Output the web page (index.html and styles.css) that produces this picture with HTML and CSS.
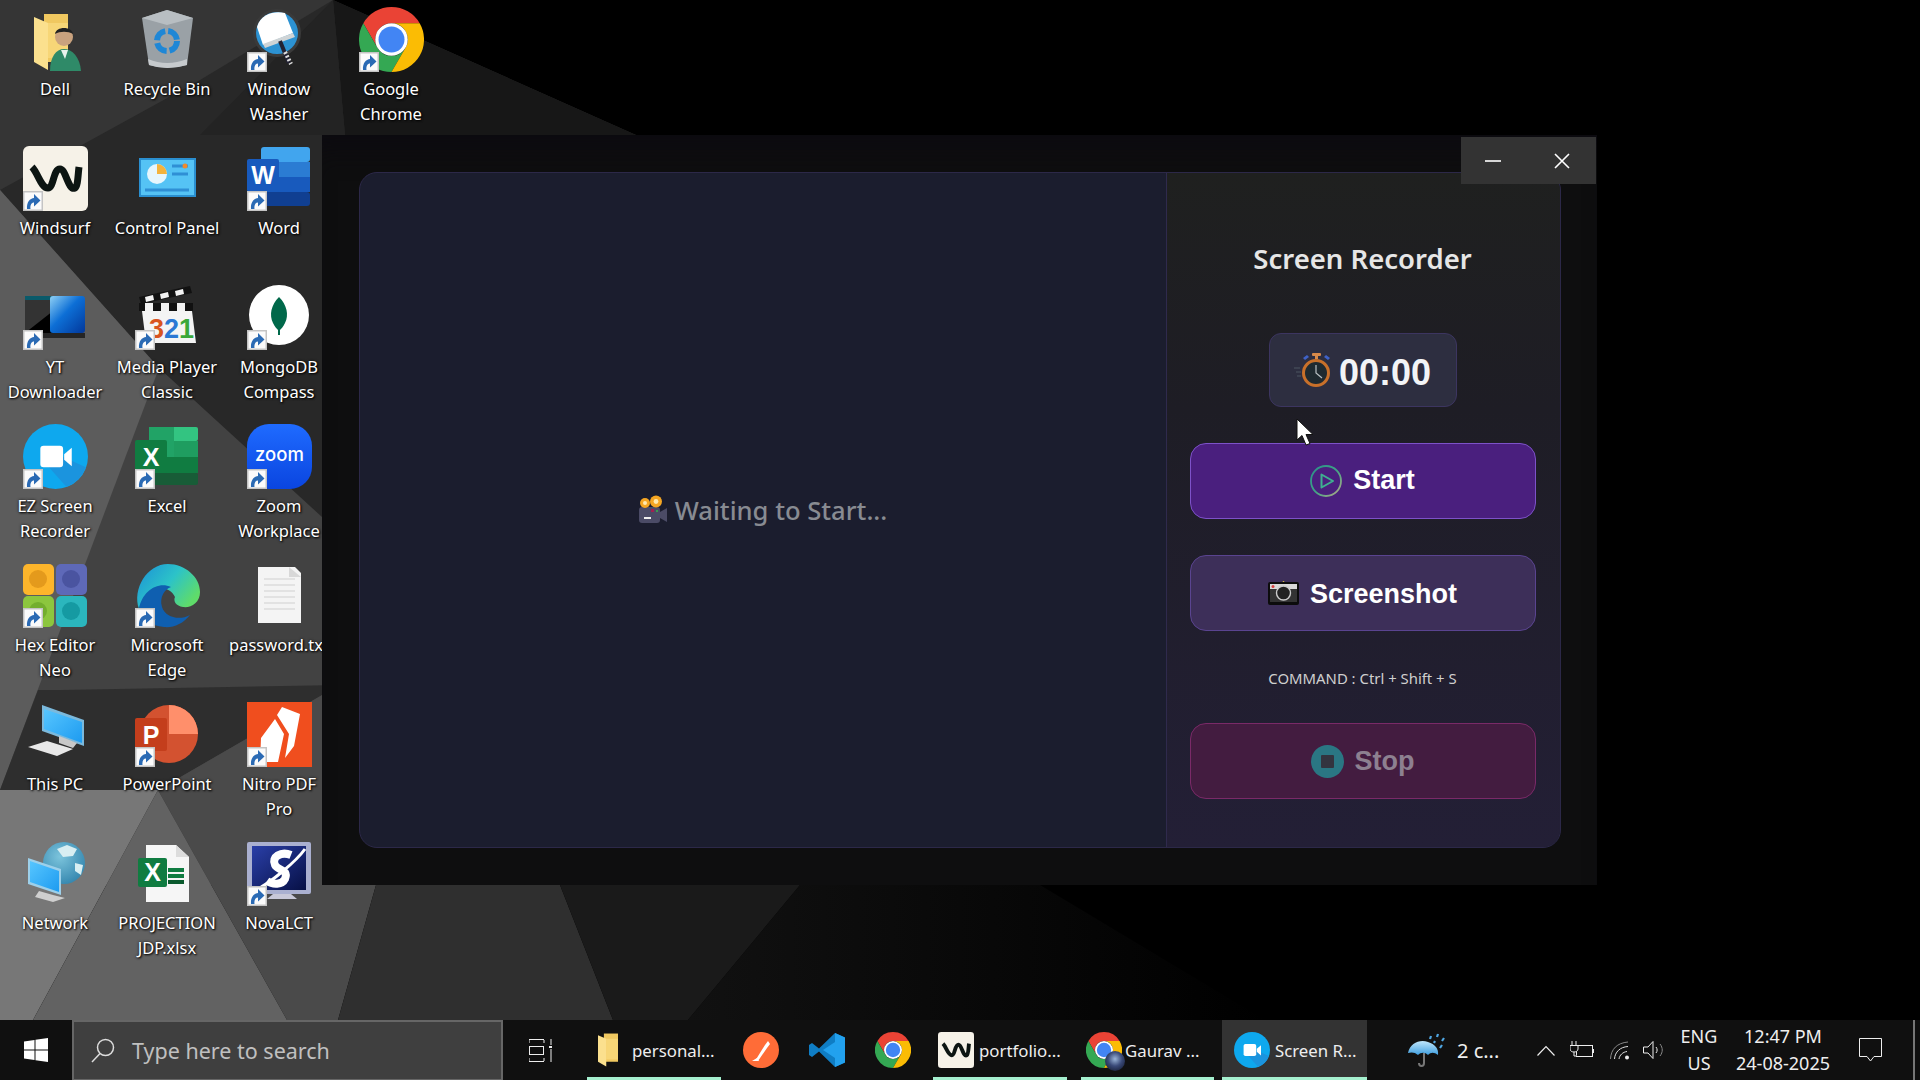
FILE: index.html
```html
<!DOCTYPE html>
<html lang="en">
<head>
<meta charset="utf-8">
<title>Screen Recorder</title>
<link rel="stylesheet" href="styles.css">
</head>
<body>
<svg class="defs" width="0" height="0" aria-hidden="true">
  <defs>
    <linearGradient id="gPlay" x1="0" y1="0" x2="1" y2="1"><stop offset="0" stop-color="#2a8f8a"/><stop offset="0.5" stop-color="#3fa585"/><stop offset="1" stop-color="#b8a888"/></linearGradient>
    <linearGradient id="gEdge" x1="0" y1="0" x2="1" y2="0.6"><stop offset="0" stop-color="#1b8fd8"/><stop offset="0.55" stop-color="#2cc3c8"/><stop offset="1" stop-color="#5fdc6a"/></linearGradient>
    <linearGradient id="gZoom" x1="0" y1="0" x2="0" y2="1"><stop offset="0" stop-color="#1f6bff"/><stop offset="1" stop-color="#0a45e0"/></linearGradient>
    <linearGradient id="gYt" x1="0" y1="0" x2="1" y2="1"><stop offset="0" stop-color="#8fd0f5"/><stop offset="0.45" stop-color="#0d6fd6"/><stop offset="1" stop-color="#02379a"/></linearGradient>
    <linearGradient id="gScreen" x1="0" y1="0" x2="1" y2="1"><stop offset="0" stop-color="#57c6ff"/><stop offset="1" stop-color="#1d9bf0"/></linearGradient>
    <linearGradient id="gNova" x1="0" y1="0" x2="1" y2="1"><stop offset="0" stop-color="#2a3fa8"/><stop offset="1" stop-color="#071045"/></linearGradient>
    <linearGradient id="gUmb" x1="0" y1="0" x2="0" y2="1"><stop offset="0" stop-color="#bfe6fb"/><stop offset="1" stop-color="#3f9fe0"/></linearGradient>
    <radialGradient id="gGlobe" cx="0.4" cy="0.35" r="0.8"><stop offset="0" stop-color="#7cc4dc"/><stop offset="1" stop-color="#2a7da8"/></radialGradient>
    <linearGradient id="gWall" x1="0" y1="0" x2="1" y2="0"><stop offset="0" stop-color="#111"/><stop offset="1" stop-color="#000"/></linearGradient>

    <symbol id="sc" viewBox="0 0 20 20"><rect width="20" height="20" fill="#c4c4c4"/><rect x="1.500" y="1.500" width="17" height="17" fill="#fbfbfb"/><path d="M4 18C3.500 11 7 7.500 11 7V3L17.500 9.500L11 15.500V11.500C8.500 11.500 7 14 7.500 18Z" fill="#2a6ab4"/></symbol>

    <symbol id="chrome" viewBox="0 0 48 48"><path d="M24 0A24 24 0 0 0 3.2 12L13.6 30A12 12 0 0 1 24 12H44.8A24 24 0 0 0 24 0Z" fill="#ea4335"/><path d="M3.2 12A24 24 0 0 0 24 48L34.4 30A12 12 0 0 1 13.6 30Z" fill="#34a853"/><path d="M44.8 12H24A12 12 0 0 1 34.4 30L24 48A24 24 0 0 0 44.8 12Z" fill="#fbbc04"/><circle cx="24" cy="24" r="12" fill="#fff"/><circle cx="24" cy="24" r="9.6" fill="#4285f4"/></symbol>

    <symbol id="windsurf" viewBox="0 0 65 65"><rect width="65" height="65" rx="6" fill="#f6f2e8"/><path d="M9 21C15 27 18 42 25 42C31 42 30 23 37 23C43 23 45 45 52 42C55 40 55 28 56 21" fill="none" stroke="#0c1512" stroke-width="7"/></symbol>

    <symbol id="ez" viewBox="0 0 60 60"><circle cx="30" cy="30" r="30" fill="#0ea8ee"/><path d="M36 30L58 40A30 30 0 0 1 40 58L24 40Z" fill="#1b94de"/><rect x="16" y="20" width="21" height="20" rx="3" fill="#fff"/><path d="M38 28l7-6v17l-7-6z" fill="#fff"/></symbol>

    <symbol id="folder" viewBox="0 0 34 56"><path d="M10 0H34V48H10Z" fill="#f0c860"/><path d="M14 9H34V44H14Z" fill="#f7d677"/><path d="M0 3L14 9V56L0 48Z" fill="#fbe08e"/></symbol>
  </defs>
</svg>

<div class="screen">
  <main class="desktop">
    <svg class="wallpaper" viewBox="0 0 1920 1020" preserveAspectRatio="none" aria-hidden="true">
      <rect width="1920" height="1020" fill="#000"/>
      <path d="M333 0L636 135V885H0V0Z" fill="#282828"/>
      <path d="M0 0H333L200 80L0 190Z" fill="#353535"/>
      <path d="M333 0L636 135H345Z" fill="#171717"/>
      <path d="M333 0L345 135H200Z" fill="#232323"/>
      <path d="M0 190L159 368L322 517V700L158 790H0Z" fill="#424242"/>
      <path d="M0 190L159 368L0 790Z" fill="#5c5c5c"/>
      <path d="M38 690L0 790H158L340 685L60 690Z" fill="#2e2e2e"/>
      <path d="M322 695L158 790L287 1020H338L376 885L376 685Z" fill="#4a4a4a"/>
      <path d="M0 790H158L33 1020H0Z" fill="#777"/>
      <path d="M158 790L287 1020H33Z" fill="#626262"/>
      <path d="M376 885H560L613 1020H338Z" fill="#2f2f2f"/>
      <path d="M560 885H800L688 1020H613Z" fill="#1a1a1a"/>
      <path d="M800 885H1040L1265 1020H688Z" fill="url(#gWall)"/>
    </svg>

    <div class="icons">
      <a class="tile"><span class="ico-wrap"><svg class="ico" viewBox="0 0 65 65"><use href="#folder" x="11" y="7" width="34" height="56"/><circle cx="41" cy="30" r="9" fill="#c9a27e"/><path d="M32 27c1-8 17-8 18 0-5-3-13-3-18 0z" fill="#222"/><path d="M27 64c0-14 6-22 14-22s16 8 17 22z" fill="#2f8a68"/><path d="M38 43l4 9 3-9z" fill="#e8f2ec"/></svg></span><span class="lbl">Dell</span></a>

      <a class="tile"><span class="ico-wrap"><svg class="ico"><use href="#windsurf"/></svg><svg class="sc"><use href="#sc"/></svg></span><span class="lbl">Windsurf</span></a>

      <a class="tile"><span class="ico-wrap"><svg class="ico" viewBox="0 0 65 65"><path d="M2 15Q2 11 6 11H30V48H6Q2 48 2 44Z" fill="#333"/><rect x="2" y="11" width="28" height="4" fill="#0a5a6a"/><path d="M2 48L30 26V48Z" fill="#000"/><rect x="27" y="11" width="35" height="37" rx="3" fill="url(#gYt)"/><path d="M14 48H62V53H14Z" fill="#000" opacity=".6"/></svg><svg class="sc"><use href="#sc"/></svg></span><span class="lbl">YT<br>Downloader</span></a>

      <a class="tile"><span class="ico-wrap"><svg class="ico"><use href="#ez"/></svg><svg class="sc"><use href="#sc"/></svg></span><span class="lbl">EZ Screen<br>Recorder</span></a>

      <a class="tile"><span class="ico-wrap"><svg class="ico" viewBox="0 0 65 65"><rect x="0" y="1" width="31" height="31" rx="5" fill="#fdb52b"/><circle cx="15" cy="16" r="9" fill="#e49a1c"/><rect x="33" y="1" width="31" height="31" rx="5" fill="#5e69b8"/><circle cx="48" cy="16" r="9" fill="#4a54a0"/><rect x="0" y="33" width="31" height="31" rx="5" fill="#8cc63e"/><circle cx="15" cy="48" r="9" fill="#73ae2e"/><rect x="33" y="33" width="31" height="31" rx="5" fill="#2bb6bd"/><circle cx="48" cy="48" r="9" fill="#159aa2"/></svg><svg class="sc"><use href="#sc"/></svg></span><span class="lbl">Hex Editor<br>Neo</span></a>

      <a class="tile"><span class="ico-wrap"><svg class="ico" viewBox="0 0 65 65"><path d="M19 3L61 18V44L19 29Z" fill="#7bb9dc"/><path d="M21 7L59 20V41L21 27Z" fill="url(#gScreen)"/><path d="M36 34L54 41L50 46L36 41Z" fill="#c8c8c8"/><path d="M5 45L24 39L50 47L34 54Z" fill="#e8e8e8"/></svg></span><span class="lbl">This PC</span></a>

      <a class="tile"><span class="ico-wrap"><svg class="ico" viewBox="0 0 65 65"><circle cx="41" cy="22" r="21" fill="url(#gGlobe)"/><path d="M34 8l10-4 10 4-4 7-10 1zM52 22l8 2-2 10-6-4z" fill="#d8eef2"/><path d="M5 17L38 28V54L5 43Z" fill="#9dd0ea"/><path d="M7 20L36 30V51L7 41Z" fill="url(#gScreen)"/><path d="M16 50L30 54L42 57L30 61L12 56Z" fill="#cfcfcf"/></svg></span><span class="lbl">Network</span></a>

      <a class="tile"><span class="ico-wrap"><svg class="ico" viewBox="0 0 65 65"><path d="M7 11L32 3L58 11L52 58Q32 64 14 58Z" fill="#9aa1a6"/><path d="M7 11L32 3L58 11L32 18Z" fill="#b8bec2"/><path d="M13 52Q32 60 52 52L52 58Q32 64 14 58Z" fill="#c6cacd"/><circle cx="32" cy="34" r="10" fill="none" stroke="#1f87d6" stroke-width="6" stroke-dasharray="13 3"/></svg></span><span class="lbl">Recycle Bin</span></a>

      <a class="tile"><span class="ico-wrap"><svg class="ico" viewBox="0 0 65 65"><rect x="5" y="13" width="55" height="37" fill="#55c3f5" stroke="#2a8fd0" stroke-width="2"/><circle cx="22" cy="28" r="10" fill="#e6f6fd"/><path d="M22 18a10 10 0 0 1 10 10H22Z" fill="#f4b33c"/><path d="M37 20h16M37 28h16M10 44h44" stroke="#2f8fd5" stroke-width="3"/><circle cx="50" cy="20" r="2.500" fill="#f08a2c"/></svg></span><span class="lbl">Control Panel</span></a>

      <a class="tile"><span class="ico-wrap"><svg class="ico" viewBox="0 0 65 65"><path d="M4 12L55 1L57 8L6 19Z" fill="#111"/><path d="M10 12l8-2 1 5-8 2zM25 9l8-2 1 5-8 2zM40 6l8-2 1 5-8 2z" fill="#f2f2f2"/><rect x="4" y="18" width="54" height="8" fill="#111"/><path d="M10 18h8v8h-8zM26 18h8v8h-8zM42 18h8v8h-8z" fill="#f2f2f2"/><path d="M7 26H57L61 58H11Z" fill="#f4f4f4"/><text class="mpc" x="14" y="53"><tspan fill="#d9541e">3</tspan><tspan fill="#2b78d4">2</tspan><tspan fill="#3aa83a">1</tspan></text></svg><svg class="sc"><use href="#sc"/></svg></span><span class="lbl">Media Player<br>Classic</span></a>

      <a class="tile"><span class="ico-wrap"><svg class="ico" viewBox="0 0 65 65"><rect x="14" y="3" width="49" height="14" rx="2" fill="#33c481"/><rect x="14" y="3" width="25" height="14" fill="#21a366"/><rect x="14" y="17" width="49" height="16" fill="#21a366"/><rect x="39" y="17" width="24" height="16" fill="#1f9d60"/><rect x="14" y="33" width="49" height="16" fill="#107c41"/><rect x="14" y="49" width="49" height="12" rx="2" fill="#185c37"/><rect y="16" width="32" height="33" rx="2" fill="#107c41"/><text class="logo-l" x="16" y="42" text-anchor="middle">X</text></svg><svg class="sc"><use href="#sc"/></svg></span><span class="lbl">Excel</span></a>

      <a class="tile"><span class="ico-wrap"><svg class="ico" viewBox="0 0 65 65"><path d="M33 1C50 1 65 14 65 29C65 40 56 45 48 44C41 43 38 38 40 34C36 24 22 22 12 32C8 36 6 40 4 46C-3 26 12 1 33 1Z" fill="url(#gEdge)"/><path d="M4 46C7 28 23 18 36 24C30 26 24 34 27 44C30 54 44 58 55 52C48 61 38 65 29 64C16 63 6 56 4 46Z" fill="#0f5fb0"/></svg><svg class="sc"><use href="#sc"/></svg></span><span class="lbl">Microsoft<br>Edge</span></a>

      <a class="tile"><span class="ico-wrap"><svg class="ico" viewBox="0 0 65 65"><circle cx="34" cy="32" r="29" fill="#d35230"/><path d="M34 3A29 29 0 0 1 63 32H34Z" fill="#ff8f6b"/><rect y="16" width="32" height="33" rx="2" fill="#c43e1c"/><text class="logo-l" x="16" y="42" text-anchor="middle">P</text></svg><svg class="sc"><use href="#sc"/></svg></span><span class="lbl">PowerPoint</span></a>

      <a class="tile"><span class="ico-wrap"><svg class="ico" viewBox="0 0 65 65"><path d="M11 4H41L54 16V61H11Z" fill="#f6f6f6"/><path d="M41 4L54 16H41Z" fill="#dcdcdc"/><rect x="33" y="27" width="16" height="4" fill="#107c41"/><rect x="33" y="33" width="16" height="4" fill="#107c41"/><rect x="33" y="39" width="16" height="4" fill="#0b5a2e"/><rect x="3" y="17" width="29" height="29" rx="2" fill="#107c41"/><text class="logo-l" x="17.500" y="40" text-anchor="middle">X</text></svg></span><span class="lbl">PROJECTION<br>JDP.xlsx</span></a>

      <a class="tile"><span class="ico-wrap"><svg class="ico" viewBox="0 0 65 65"><circle cx="30" cy="26" r="24" fill="#3a3a3a"/><circle cx="30" cy="26" r="21" fill="#2c92d2"/><path d="M10 20C14 6 28 4 38 6L46 26L16 38Z" fill="#fff"/><path d="M16 37L46 26L48 30L18 41Z" fill="#cfd4d6"/><path d="M33 34L42 56" stroke="#223" stroke-width="4"/><path d="M38 45L44 57" stroke="#ddd" stroke-width="4" stroke-dasharray="2 2"/></svg><svg class="sc"><use href="#sc"/></svg></span><span class="lbl">Window<br>Washer</span></a>

      <a class="tile"><span class="ico-wrap"><svg class="ico" viewBox="0 0 65 65"><rect x="14" y="1" width="49" height="15" rx="3" fill="#41a5ee"/><rect x="14" y="16" width="49" height="15" fill="#2b7cd3"/><rect x="14" y="31" width="49" height="15" fill="#185abd"/><rect x="14" y="46" width="49" height="14" rx="3" fill="#103f91"/><rect y="13" width="32" height="33" rx="2" fill="#185abd"/><text class="logo-l" x="16" y="38" text-anchor="middle">W</text></svg><svg class="sc"><use href="#sc"/></svg></span><span class="lbl">Word</span></a>

      <a class="tile"><span class="ico-wrap"><svg class="ico" viewBox="0 0 65 65"><circle cx="32" cy="30" r="30" fill="#fff"/><path d="M32 12C40 20 42 30 38 38C36 42 34 44 33 45L33 50H31L31 45C30 44 28 42 26 38C22 30 24 20 32 12Z" fill="#00684a"/></svg><svg class="sc"><use href="#sc"/></svg></span><span class="lbl">MongoDB<br>Compass</span></a>

      <a class="tile"><span class="ico-wrap"><svg class="ico" viewBox="0 0 65 65"><rect width="65" height="65" rx="22" fill="url(#gZoom)"/><text class="zoomt" x="32.500" y="37" text-anchor="middle">zoom</text></svg><svg class="sc"><use href="#sc"/></svg></span><span class="lbl">Zoom<br>Workplace</span></a>

      <a class="tile"><span class="ico-wrap"><svg class="ico" viewBox="0 0 65 65"><path d="M11 4H48L54 10V60H11Z" fill="#f4f4f4"/><path d="M17 16H48M17 22H48M17 28H48M17 34H48M17 40H48M17 46H48" stroke="#dcdcdc" stroke-width="1.500"/><path d="M42 4L54 14H42Z" fill="#d8d8d8"/></svg></span><span class="lbl">password.txt</span></a>

      <a class="tile"><span class="ico-wrap"><svg class="ico" viewBox="0 0 65 65"><rect width="65" height="65" fill="#f04e1e"/><path d="M13 60L14 36L28 17L37 32L31 60ZM30 13L35 5L53 12L47 44L38 56L42 32Z" fill="#fff"/></svg><svg class="sc"><use href="#sc"/></svg></span><span class="lbl">Nitro PDF<br>Pro</span></a>

      <a class="tile"><span class="ico-wrap"><svg class="ico" viewBox="0 0 65 65"><rect x="0" y="1" width="64" height="52" rx="2" fill="#aab0d0"/><rect x="5" y="5" width="54" height="44" fill="url(#gNova)"/><path d="M14 46C22 42 48 22 58 8" stroke="#fff" stroke-width="3" fill="none"/><path d="M44 14C34 10 24 16 28 24C31 30 42 28 38 38C35 44 26 44 20 40" fill="none" stroke="#fff" stroke-width="8"/><path d="M20 58H50L44 53H26Z" fill="#c8c8d8"/></svg><svg class="sc"><use href="#sc"/></svg></span><span class="lbl">NovaLCT</span></a>

      <a class="tile"><span class="ico-wrap"><svg class="ico"><use href="#chrome"/></svg><svg class="sc"><use href="#sc"/></svg></span><span class="lbl">Google<br>Chrome</span></a>
    </div>

    <section class="window">
      <div class="controls">
        <button class="ctl ctl-min" type="button" aria-label="Minimize"><svg width="16" height="16" viewBox="0 0 16 16"><path d="M0 8H16" stroke="#fff" stroke-width="1.600"/></svg></button>
        <button class="ctl" type="button" aria-label="Close"><svg width="16" height="16" viewBox="0 0 16 16"><path d="M1 1L15 15M15 1L1 15" stroke="#fff" stroke-width="1.600"/></svg></button>
      </div>
      <div class="card">
        <div class="preview">
          <svg class="cam" width="28" height="30" viewBox="0 0 28 30"><rect x="0" y="12" width="21" height="16" rx="3" fill="#4b4b66"/><path d="M21 17L28 13V27L21 23Z" fill="#4b4b66"/><circle cx="6" cy="8" r="5" fill="#f5a623"/><circle cx="17" cy="6.500" r="6" fill="#f5a623"/><circle cx="6" cy="8" r="2" fill="#ffe9b0"/><circle cx="17" cy="6.500" r="2.400" fill="#ffe9b0"/><rect x="5" y="22" width="7" height="2" fill="#eee"/><rect x="12" y="14" width="3" height="3" fill="#a02050"/><rect x="17" y="15" width="2" height="2" fill="#3a9a50"/></svg>
          <span class="waiting">Waiting to Start...</span>
        </div>
        <aside class="side">
          <h1 class="title">Screen Recorder</h1>
          <div class="timer">
            <svg width="36" height="36" viewBox="0 0 36 36"><path d="M0 16H6M2 20H7M3 24H7" stroke="#4d5560" stroke-width="1"/><rect x="18" y="1" width="9" height="3" rx="1" fill="#d98a4a"/><rect x="21" y="3" width="3" height="4" fill="#d98a4a"/><path d="M9 6l4-3 2 2-4 3zM36 6l-4-3-2 2 4 3z" fill="#3f62c8"/><circle cx="22" cy="21" r="12.500" fill="#1f2a30" stroke="#c8702a" stroke-width="3"/><path d="M22 13V21L28 26" stroke="#b8c0c4" stroke-width="1.200" fill="none"/></svg>
            <span class="time">00:00</span>
          </div>
          <button class="btn btn-start" type="button"><svg width="32" height="32" viewBox="0 0 32 32"><circle cx="16" cy="16" r="15" fill="none" stroke="url(#gPlay)" stroke-width="1.800"/><path d="M11.500 9.500L23 16L11.500 22.500Z" fill="none" stroke="#3fb090" stroke-width="2" stroke-linejoin="round"/></svg><span class="lift">Start</span></button>
          <button class="btn btn-shot" type="button"><svg width="31" height="24" viewBox="0 0 31 24"><path d="M11 4L15.500 0L20 4Z" fill="#f6d83a"/><rect width="31" height="23" y="1" rx="2" fill="#0c0c0c"/><rect x="2" y="3" width="27" height="5" fill="#d8d8d8"/><rect x="2" y="8" width="27" height="13" fill="#333"/><circle cx="5" cy="5.500" r="1.500" fill="#d84040"/><circle cx="15.500" cy="12" r="7" fill="#222" stroke="#ccc" stroke-width="1.400"/></svg><span class="drop">Screenshot</span></button>
          <p class="hint">COMMAND : Ctrl + Shift + S</p>
          <button class="btn btn-stop" type="button"><svg width="33" height="33" viewBox="0 0 33 33"><circle cx="16.500" cy="16.500" r="16.500" fill="#2a7683"/><rect x="10" y="10" width="13" height="13" rx="1" fill="#33343f"/></svg><span>Stop</span></button>
        </aside>
      </div>
    </section>

    <svg class="cursor" width="19" height="28" viewBox="0 0 19 28"><path d="M1 1V22L6 17.500L10 27L14 25.500L10 16.500H17Z" fill="#fff" stroke="#111" stroke-width="1"/></svg>
  </main>

  <footer class="taskbar">
    <div class="start"><svg width="24" height="24" viewBox="0 0 24 24"><path d="M0 3.500L10.500 2V11.500H0ZM11.500 1.800L24 0V11.500H11.500ZM0 12.500H10.500V22L0 20.500ZM11.500 12.500H24V24L11.500 22.200Z" fill="#fff"/></svg></div>
    <div class="search"><svg width="24" height="25" viewBox="0 0 24 25"><circle cx="14.500" cy="9.500" r="8" fill="none" stroke="#ddd" stroke-width="1.500"/><path d="M9 15.500L1 24" stroke="#ddd" stroke-width="1.500"/></svg><span>Type here to search</span></div>
    <div class="taskview"><svg width="23" height="23" viewBox="0 0 23 23"><path d="M0 .5H15M0 22.500H15M0 22V19M15 22V19M0 1V4M15 1V4" stroke="#eee" fill="none"/><rect x=".5" y="7.500" width="14" height="8" fill="none" stroke="#eee"/><path d="M22 0V6M22 10V23" stroke="#eee"/><rect x="20" y="7" width="3" height="2" fill="#eee"/></svg></div>
    <div class="task run w134 first"><svg class="ti-f"><use href="#folder"/></svg><span>personal...</span></div>
    <div class="pin pin-first"><svg class="ti" viewBox="0 0 36 36"><circle cx="18" cy="18" r="18" fill="#ff6c37"/><path d="M12 29L22 13L25 9L27 12L24 16L15 29Z" fill="#fff"/><path d="M9 29H16L14 26Z" fill="#fff"/></svg></div>
    <div class="pin"><svg class="ti" viewBox="0 0 36 36"><path d="M26 1L36 5.500V30.500L26 35L10 19.500L3 25L0 23V13L3 11L10 16.500Z" fill="#0f7dc4"/><path d="M26 1L36 5.500V30.500L26 35V10L14 18L26 26Z" fill="#22a1ee"/></svg></div>
    <div class="pin"><svg class="ti"><use href="#chrome"/></svg></div>
    <div class="task run w134 gap7"><svg class="ti"><use href="#windsurf"/></svg><span>portfolio...</span></div>
    <div class="task run w133 gap14 tight"><span class="stack"><svg class="ti"><use href="#chrome"/></svg><span class="avatar"></span></span><span>Gaurav ...</span></div>
    <div class="task run active"><svg class="ti"><use href="#ez"/></svg><span>Screen R...</span></div>

    <div class="weather"><svg width="37" height="35" viewBox="0 0 37 35"><path d="M0 20C2 10 12 6 20 9C27 11 31 16 30 22C26 19 23 19 20 22C17 19 13 19 10 22C7 19 3 19 0 20Z" fill="url(#gUmb)"/><path d="M16 20V30C16 34 11 34 11 30" fill="none" stroke="#777" stroke-width="2"/><path d="M23 3L22 6M30 1L29 4M36 5L34 8M27 8L26 10M34 12L32 15" stroke="#4fa6e2" stroke-width="2.200"/></svg><span>2 c...</span></div>
    <div class="tray w36"><svg width="18" height="11" viewBox="0 0 18 11"><path d="M.5 10.500L9 1.500L17.500 10.500" fill="none" stroke="#eee" stroke-width="1.200"/></svg></div>
    <div class="tray w36"><svg width="24" height="18" viewBox="0 0 24 18"><rect x="6.500" y="4.500" width="16" height="11" fill="none" stroke="#eee"/><rect x="23" y="8" width="1" height="4" fill="#eee"/><path d="M2 0V4M6 0V4M0 4.500H8V8C8 10 6 11 4 11C2 11 0 10 0 8ZM4 11V15H7" fill="#101010" stroke="#eee"/></svg></div>
    <div class="tray w40"><svg width="20" height="19" viewBox="0 0 20 19"><path d="M.5 18C1 8 7 2 18 1" fill="none" stroke="#888"/><path d="M4.500 18C5 11 10 6 18 5.500" fill="none" stroke="#ddd"/><path d="M9 18C9.500 14 13 11 17 10.500" fill="none" stroke="#ddd"/><circle cx="17" cy="16.500" r="2" fill="#eee"/></svg></div>
    <div class="tray w28"><svg width="22" height="20" viewBox="0 0 22 20"><path d="M.5 7H5L10 1.500V18.500L5 13H.5Z" fill="none" stroke="#eee"/><path d="M13 7C14.500 9 14.500 11 13 13" fill="none" stroke="#eee"/><path d="M17 4C20 8 20 12 17 16" fill="none" stroke="#888"/></svg></div>
    <div class="lang"><span>ENG</span><span>US</span></div>
    <div class="clock"><span>12:47 PM</span><span>24-08-2025</span></div>
    <div class="notify"><svg width="23" height="25" viewBox="0 0 23 25"><path d="M.5 .5H22.500V18.500H15L11.500 23L8 18.500H.5Z" fill="none" stroke="#eee"/></svg></div>
    <div class="peek"></div>
  </footer>
</div>
</body>
</html>
```

FILE: styles.css
```css
*{box-sizing:border-box}
html,body{margin:0;height:100%;overflow:hidden;background:#000}
.defs{position:absolute}
.screen{width:1920px;height:1080px;display:flex;flex-direction:column;font-family:"Noto Sans","Open Sans",sans-serif;color:#fff}

.desktop{position:relative;height:1020px;overflow:hidden}
.wallpaper{position:absolute;inset:0;width:100%;height:100%}

.icons{position:relative;display:grid;grid-auto-flow:column;grid-template-rows:repeat(7,139px);grid-auto-columns:112px;margin-left:-1px;height:1020px;align-content:start}
.tile{display:flex;flex-direction:column;align-items:center;padding-top:7px}
.ico-wrap{position:relative;width:65px;height:65px;display:block;flex:none}
.ico{display:block;width:65px;height:65px;overflow:visible}
.sc{position:absolute;left:0;bottom:0;width:20px;height:20px}
.lbl{margin-top:4px;font-size:16.5px;line-height:25px;text-align:center;white-space:nowrap;text-shadow:1px 1px 2px #000,0 0 3px rgba(0,0,0,.8)}
.logo-l{font:700 25px "Liberation Sans",sans-serif;fill:#fff}
.mpc{font:700 27px "Liberation Sans",sans-serif}
.zoomt{font:500 18.5px Inter,sans-serif;fill:#fff}

.window{position:absolute;left:322px;top:135px;width:1275px;height:750px;padding:37px 36px 37px 37px;background:#0e0e0f;box-shadow:inset 0 30px 30px -20px #0c0a10}
.controls{position:absolute;top:2px;right:1px;display:flex;width:135px;height:47px;background:#333;z-index:1}
.ctl{width:50%;flex:none;display:flex;align-items:center;justify-content:center;background:none;border:0;padding:0}
.ctl-min{padding-right:4px}
.card{display:flex;height:676px;border:1px solid #2c2848;border-radius:18px;overflow:hidden;background:#1b1d2e}
.preview{flex:1;display:flex;align-items:center;justify-content:center;gap:8px;font-size:25.6px;font-weight:500;color:#888b92}
.cam{flex:none}
.side{width:394px;flex:none;display:flex;flex-direction:column;align-items:center;border-left:1px solid #2f2a4d;background:linear-gradient(180deg,#1f201f 0%,#1e1d25 35%,#231f36 100%);padding:67px 2px 0 0}
.title{margin:0;font-size:27.5px;line-height:38px;font-weight:600;color:#e6e6e6}
.timer{margin-top:55px;width:188px;height:74px;border:1px solid #3c3560;border-radius:12px;background:#2d2e40;display:flex;align-items:center;justify-content:center;gap:9px}
.time{font:700 36px "Liberation Sans",sans-serif;color:#f2f4f6;padding-top:5px}
.btn{width:346px;height:76px;flex:none;display:flex;align-items:center;justify-content:center;gap:11px;border-radius:16px;border:1.5px solid;font:700 27px "Liberation Sans",sans-serif;color:#fff;padding:0}
.lift{margin-top:-2px}
.drop{margin-top:2px}
.btn-start{margin-top:36px;background:#4a1f7e;border-color:#7d52c8}
.btn-shot{margin-top:36px;background:#3d2f59;border-color:#5a4490}
.btn-stop{margin-top:33px;background:#431c40;border-color:#7a2a68;color:#8d8090}
.hint{margin:35px 0 0;font-size:14.9px;line-height:24px;color:#cfcfcf}
.cursor{position:absolute;left:1296px;top:418px}

.taskbar{height:60px;display:flex;align-items:stretch;background:#101010;font-size:19px;color:#eee}
.start{width:72px;display:flex;align-items:center;justify-content:center}
.search{width:431px;display:flex;align-items:center;gap:17px;padding-left:17px;background:#3f3f3f;border:2px solid #666;border-bottom-width:1px;color:#c0c0c0;font-size:21.5px;padding-bottom:1px}
.taskview{width:84px;display:flex;align-items:center;justify-content:center;padding-right:10px}
.task{display:flex;align-items:center;gap:5px;padding-left:5px;position:relative;font-size:16.8px;white-space:nowrap}
.run::after{content:"";position:absolute;left:0;right:0;bottom:0;height:3px;background:#a5f0cf}
.w134{width:134px}
.w133{width:133px}
.first{padding-left:11px;gap:14px}
.gap7{margin-left:7px}
.gap14{margin-left:14px}
.tight{gap:3px}
.active{width:145px;margin-left:8px;padding-left:12px;background:#333;gap:5px}
.pin{width:66px;display:flex;align-items:center;justify-content:center}
.pin-first{margin-left:7px}
.ti{width:36px;height:36px;flex:none;display:block}
.ti-f{width:20px;height:34px;flex:none}
.stack{position:relative;display:block;width:36px;height:36px;flex:none}
.avatar{position:absolute;right:-3px;bottom:-3px;width:20px;height:20px;border-radius:50%;background:radial-gradient(circle at 50% 40%,#9ab4d8 0,#3a4a78 45%,#0c1020 100%)}
.weather{width:150px;display:flex;align-items:center;gap:12px;padding-left:41px;font-size:20px;white-space:nowrap}
.weather svg{flex:none}
.tray{display:flex;align-items:center;justify-content:center}
.w36{width:36px}
.w40{width:40px}
.w28{width:28px}
.weather + .tray{margin-left:11px}
.lang,.clock{display:flex;flex-direction:column;align-items:center;justify-content:center;line-height:27px;white-space:nowrap;font-size:18px}
.lang{width:62px}
.clock{width:106px}
.notify{width:68px;display:flex;align-items:center;justify-content:center}
.peek{margin-left:9px;width:2px;background:#777}
```
